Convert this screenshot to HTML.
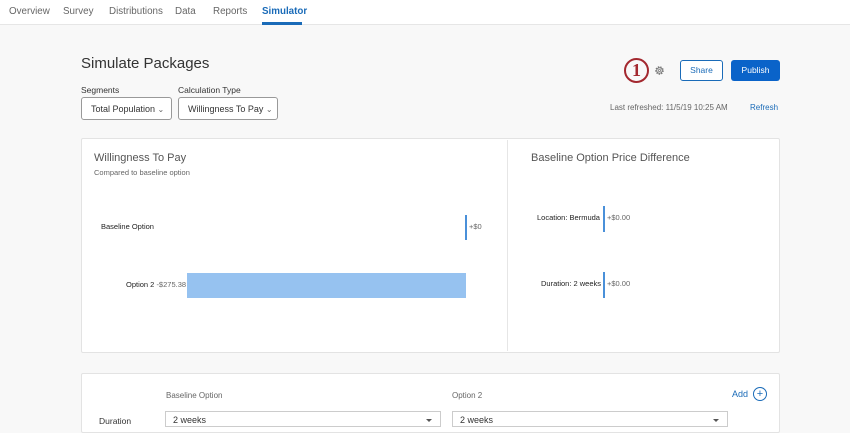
<!DOCTYPE html>
<html><head><style>
*{margin:0;padding:0;box-sizing:border-box}
body{width:850px;height:425px;overflow:hidden;background:#f8f8f8;font-family:"Liberation Sans",sans-serif;position:relative;color:#333}
.a{position:absolute;white-space:nowrap}
.nav{position:absolute;left:0;top:0;width:850px;height:25px;background:#fff;border-bottom:1px solid #e6e6e6}
.nav span{position:absolute;top:6px;font-size:9.8px;color:#666}
.sel{position:absolute;height:23px;background:#fff;border:1px solid #999;border-radius:3px;font-size:9px;color:#333;padding:6px 0 0 9px}
.card{position:absolute;background:#fff;border:1px solid #e3e3e3;border-radius:2px}
.lbl{font-size:7.5px;color:#222}
.val{font-size:7.5px;color:#666}
.dd{position:absolute;height:16px;background:#fff;border:1px solid #ccc;font-size:9px;padding:3px 0 0 7px}
.dd:after{content:"";position:absolute;right:8px;top:7px;border:3px solid transparent;border-top:3px solid #555}
</style></head><body>
<div class="nav">
<span style="left:9px">Overview</span><span style="left:63px">Survey</span><span style="left:109px">Distributions</span><span style="left:175px">Data</span><span style="left:213px">Reports</span><span style="left:262px;color:#1a6bb8;font-weight:bold">Simulator</span>
<div class="a" style="left:262px;top:22px;width:40px;height:3px;background:#1a6bb8"></div>
</div>
<div class="a" style="left:81px;top:55px;font-size:15px;color:#333">Simulate Packages</div>
<div class="a" style="left:81px;top:85px;font-size:8.5px">Segments</div>
<div class="a" style="left:178px;top:85px;font-size:8.5px">Calculation Type</div>
<div class="sel" style="left:81px;top:97px;width:91px">Total Population <span style="color:#666;font-size:8px">&#8964;</span></div>
<div class="sel" style="left:178px;top:97px;width:100px">Willingness To Pay <span style="color:#666;font-size:8px">&#8964;</span></div>
<div class="a" style="left:624px;top:58px;width:25px;height:25px;border:2px solid #a3282f;border-radius:50%;font-family:'Liberation Serif',serif;font-weight:bold;font-size:18px;color:#a3282f;text-align:center;line-height:21px">1</div>
<svg class="a" style="left:654px;top:65px" width="11" height="11" viewBox="0 0 12 12"><circle cx="6" cy="6" r="4" fill="none" stroke="#777" stroke-width="1.3" stroke-dasharray="1.6 1.2"/><circle cx="6" cy="6" r="3" fill="none" stroke="#777" stroke-width="1"/><circle cx="6" cy="6" r="1.2" fill="none" stroke="#777" stroke-width=".8"/></svg>
<div class="a" style="left:680px;top:60px;width:43px;height:21px;border:1px solid #1a6bb8;border-radius:3px;background:#fff;color:#1a6bb8;font-size:8.5px;text-align:center;line-height:19px">Share</div>
<div class="a" style="left:731px;top:60px;width:49px;height:21px;border-radius:3px;background:#0a63c9;color:#fff;font-size:8.5px;text-align:center;line-height:21px">Publish</div>
<div class="a" style="left:610px;top:103px;font-size:8px;color:#666">Last refreshed: 11/5/19 10:25 AM</div>
<div class="a" style="left:750px;top:103px;font-size:8px;color:#1a6bb8">Refresh</div>
<div class="card" style="left:81px;top:138px;width:699px;height:215px"></div>
<div class="a" style="left:507px;top:140px;width:1px;height:211px;background:#e6e6e6"></div>
<div class="a" style="left:94px;top:152px;font-size:11px;color:#555">Willingness To Pay</div>
<div class="a" style="left:94px;top:168px;font-size:7.5px;color:#666">Compared to baseline option</div>
<div class="a lbl" style="left:101px;top:222px">Baseline Option</div>
<div class="a" style="left:465px;top:215px;width:2px;height:25px;background:#4a90d9"></div>
<div class="a val" style="left:469px;top:222px">+$0</div>
<div class="a lbl" style="left:126px;top:280px">Option 2 <span class="val">-$275.38</span></div>
<div class="a" style="left:187px;top:273px;width:279px;height:25px;background:#96c2f0"></div>
<div class="a" style="left:531px;top:152px;font-size:11px;color:#555">Baseline Option Price Difference</div>
<div class="a lbl" style="left:537px;top:213px">Location: Bermuda</div>
<div class="a" style="left:603px;top:206px;width:2px;height:26px;background:#4a90d9"></div>
<div class="a val" style="left:607px;top:213px">+$0.00</div>
<div class="a lbl" style="left:541px;top:279px">Duration: 2 weeks</div>
<div class="a" style="left:603px;top:272px;width:2px;height:26px;background:#4a90d9"></div>
<div class="a val" style="left:607px;top:279px">+$0.00</div>
<div class="card" style="left:81px;top:373px;width:699px;height:60px"></div>
<div class="a" style="left:166px;top:391px;font-size:8px;color:#666">Baseline Option</div>
<div class="a" style="left:452px;top:391px;font-size:8px;color:#666">Option 2</div>
<div class="a" style="left:732px;top:389px;font-size:9px;color:#1a6bb8">Add</div>
<div class="a" style="left:753px;top:387px;width:14px;height:14px;border:1px solid #1a6bb8;border-radius:50%;color:#1a6bb8;font-size:11px;text-align:center;line-height:12px">+</div>
<div class="a" style="left:99px;top:416px;font-size:8.5px">Duration</div>
<div class="dd" style="left:165px;top:411px;width:276px">2 weeks</div>
<div class="dd" style="left:452px;top:411px;width:276px">2 weeks</div>
</body></html>
